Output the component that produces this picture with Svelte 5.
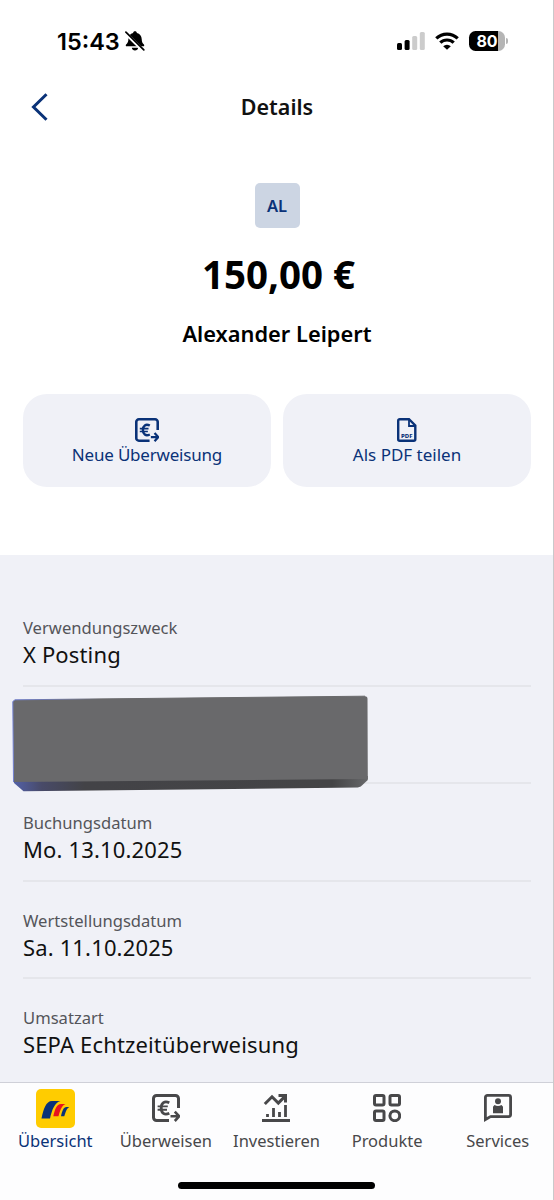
<script>
  const details = [
    { label: 'Verwendungszweck', value: 'X Posting' },
    { label: '', value: '' },
    { label: 'Buchungsdatum', value: 'Mo. 13.10.2025' },
    { label: 'Wertstellungsdatum', value: 'Sa. 11.10.2025' },
    { label: 'Umsatzart', value: 'SEPA Echtzeitüberweisung' },
  ];

  const tabs = [
    { id: 'overview', label: 'Übersicht' },
    { id: 'transfer', label: 'Überweisen' },
    { id: 'invest', label: 'Investieren' },
    { id: 'products', label: 'Produkte' },
    { id: 'services', label: 'Services' },
  ];

  let active = $state('overview');
</script>

{#snippet transferIcon(size)}
  <svg width={size} height={size} viewBox="0 0 28 28" fill="none" stroke="currentColor" stroke-width="3">
    <path d="M17 26.5H4.5a3 3 0 0 1-3-3v-19a3 3 0 0 1 3-3h19a3 3 0 0 1 3 3V14" />
    <path d="M17.300 8.800C12.500 6.400 9.200 9 9.200 14s3.300 7.600 8.100 5.200" stroke-width="2.800" />
    <path d="M5.600 12.400h10.200M5.600 15.800h9.400" stroke-width="1.900" />
    <path d="M18.500 22.300h8M22.800 17.600l4.300 4.700-4.300 4.700" stroke-width="2.600" />
  </svg>
{/snippet}

<div class="screen">
  <div class="status">
    <div class="clock">
      <span>15:43</span>
      <svg width="20" height="20" viewBox="0 0 20 20">
        <path d="M10 .3c1.100 0 1.800.7 1.900 1.600 3 .8 4.700 3.100 4.800 6.100.1 3 .8 4.300 2.200 5.400.6.600.4 1.900-.6 1.900H1.700c-1 0-1.200-1.300-.6-1.900 1.500-1.200 2.200-2.400 2.300-5.400.1-3 1.700-5.300 4.700-6.100C8.200 1 8.900.3 10 .3zM6.800 16.800h6.400c-.3 1.700-1.500 2.600-3.200 2.600s-2.900-.9-3.200-2.600z" />
        <path d="M.4 2 18 19.500" stroke="#fff" stroke-width="3.300" />
        <path d="M.9 1.200 18.800 18.900" stroke="#000" stroke-width="1.700" stroke-linecap="round" />
      </svg>
    </div>
    <div class="signals">
      <svg width="28" height="18" viewBox="0 0 28 18">
        <rect x="0" y="11" width="5" height="7" rx="1.500" />
        <rect x="7.600" y="8" width="5" height="10" rx="1.500" />
        <rect x="15.200" y="4" width="5" height="14" rx="1.500" fill="#ccc" />
        <rect x="22.800" y="0" width="5" height="18" rx="1.500" fill="#ccc" />
      </svg>
      <svg class="wifi" width="24" height="18" viewBox="0 0 24 18" fill="none" stroke="#000" stroke-width="3.200">
        <path d="M1.300 6.400a15.300 15.300 0 0 1 21.400 0" />
        <path d="M5.300 10.700a9.600 9.600 0 0 1 13.400 0" />
        <path d="M12 17.800 8.200 14.200a5.400 5.400 0 0 1 7.600 0z" fill="#000" stroke="none" />
      </svg>
      <div class="battery"><span>80</span></div>
      <i class="cap"></i>
    </div>
  </div>

  <header>
    <button class="back" aria-label="Zurück">
      <svg width="17" height="28" viewBox="0 0 17 28" fill="none" stroke="#0a3278" stroke-width="3">
        <path d="M15.500 1.300 2.500 14l13 12.700" />
      </svg>
    </button>
    <h1>Details</h1>
  </header>

  <section class="summary">
    <div class="avatar">AL</div>
    <div class="amount">150,00 €</div>
    <div class="name">Alexander Leipert</div>
  </section>

  <div class="actions">
    <button>
      {@render transferIcon(24)}
      <span class="new">Neue Überweisung</span>
    </button>
    <button>
      <svg width="20" height="24" viewBox="0 0 20 24" fill="none" stroke="currentColor" stroke-width="2.400">
        <path d="M2.700 1.200H12L18.300 7.500V21.300a1.500 1.500 0 0 1-1.500 1.500H2.700a1.500 1.500 0 0 1-1.500-1.500V2.700a1.500 1.500 0 0 1 1.500-1.500z" />
        <path d="M12 1.200V8h6.300" stroke-width="1.800" />
        <text x="9.800" y="19.500" text-anchor="middle">PDF</text>
      </svg>
      <span>Als PDF teilen</span>
    </button>
  </div>

  <section class="details">
    {#each details as row}
      <div class="row">
        <div class="label">{row.label}</div>
        <div class="value">{row.value}</div>
      </div>
    {/each}
    <svg class="cover" width="358" height="98" viewBox="0 0 358 98">
      <defs>
        <linearGradient id="edge">
          <stop offset="0" stop-color="#5361a8" />
          <stop offset=".08" stop-color="#484a68" />
          <stop offset=".2" stop-color="#434347" />
          <stop offset=".9" stop-color="#444446" />
          <stop offset="1" stop-color="#67686a" />
        </linearGradient>
        <linearGradient id="outline">
          <stop offset="0" stop-color="#7180d2" />
          <stop offset=".25" stop-color="#69696b" />
        </linearGradient>
      </defs>
      <path d="M1.500 86 355.800 82v4l-7 6.500-3 1L11.500 97.200 2 89z" fill="url(#edge)" />
      <path d="M.8 7.500 3 5.800 353 2.200a2.500 2.500 0 0 1 2.500 2.500l.3 80.300L1.500 88z" fill="#69696b" />
      <path d="M1.500 88 .8 7.500 3 5.800 353 2.200" fill="none" stroke="url(#outline)" />
    </svg>
  </section>

  <nav>
    {#each tabs as tab}
      <button class="tab" class:active={active === tab.id} onclick={() => (active = tab.id)}>
        <span class="icon">
          {#if tab.id === 'overview'}
            <svg width="39" height="39" viewBox="0 0 39 39">
              <rect width="39" height="39" rx="5" fill="#fc0" />
              <path d="M5.500 29.500C7.500 20 10 12 16 12h8.500c-6 1.500-8.500 9-10.500 17.500z" fill="#0a3278" />
              <path d="M17.300 27.300c1.500-7 3.500-12.300 7.700-12.300h4.500c-4 1.500-5.500 7-7 12.300z" fill="#e8141e" />
              <path d="M25 27.300c1-5 2.500-9.300 5.500-9.300h2.800c-2.800 1.500-3.800 5.500-5 9.300z" fill="#0a3278" />
            </svg>
          {:else if tab.id === 'transfer'}
            {@render transferIcon(28)}
          {:else if tab.id === 'invest'}
            <svg width="28" height="28" viewBox="0 0 28 28" fill="none" stroke="currentColor" stroke-width="3">
              <path d="M2.800 10 10 2.800l6.300 6.300L23 2.400M16.500 1.500h7V8.500" />
              <path d="M0 26.500h28" />
              <path d="M5.500 20v3M11.500 14v9M17.500 18v5M23.500 11v12" stroke-width="2.800" />
            </svg>
          {:else if tab.id === 'products'}
            <svg width="28" height="28" viewBox="0 0 28 28" fill="none" stroke="currentColor" stroke-width="3">
              <rect x="1.500" y="1.500" width="9.500" height="9.500" rx="1.500" />
              <rect x="17" y="1.500" width="9.500" height="9.500" rx="1.500" />
              <rect x="1.500" y="17" width="9.500" height="9.500" rx="1.500" />
              <circle cx="21.800" cy="21.800" r="4.900" />
            </svg>
          {:else}
            <svg width="28" height="28" viewBox="0 0 28 28" fill="none" stroke="currentColor" stroke-width="2.800">
              <path d="M1.400 25.500V3.400a2 2 0 0 1 2-2h21.200a2 2 0 0 1 2 2v17.200a2 2 0 0 1-2 2H6.500z" />
              <circle cx="14" cy="7.200" r="3" fill="currentColor" stroke="none" />
              <path d="M9 19.200v-6.500l1.500-1.700q3.500 1.800 7 0l1.500 1.700v6.500z" fill="currentColor" stroke="none" />
            </svg>
          {/if}
        </span>
        <span>{tab.label}</span>
      </button>
    {/each}
    <div class="home"></div>
  </nav>
</div>

<style>
  :global(body) {
    margin: 0;
    background: #fff;
  }

  .screen {
    box-sizing: border-box;
    width: 554px;
    height: 1200px;
    display: flex;
    flex-direction: column;
    overflow: hidden;
    position: relative;
    background: #fff;
    color: #111;
    font-family: 'Noto Sans', sans-serif;
  }

  /* thin line along the right side of the screen */
  .screen::after {
    content: '';
    position: absolute;
    inset: 0 0 0 auto;
    width: 1px;
    background: #c9c9cb;
  }

  button {
    border: 0;
    padding: 0;
    margin: 0;
    background: none;
    color: inherit;
    font: inherit;
  }

  svg {
    display: block;
    flex: none;
  }

  .status {
    height: 82px;
    flex: none;
    display: flex;
    align-items: center;
    justify-content: space-between;
    padding: 0 46px 0 57px;
    box-sizing: border-box;
    font-family: Inter, sans-serif;
    color: #000;
  }

  .clock,
  .signals {
    display: flex;
    align-items: center;
  }

  .clock {
    gap: 5px;
    font-size: 23.500px;
    font-weight: 600;
  }

  .wifi {
    margin: 0 10px;
  }

  .battery {
    width: 36px;
    height: 20px;
    border-radius: 6.500px;
    background: linear-gradient(90deg, #000 29px, #b5b5b5 29px);
    color: #fff;
    font-size: 16px;
    font-weight: 700;
    line-height: 20px;
    text-align: center;
  }

  .cap {
    width: 2px;
    height: 6px;
    margin-left: 1px;
    border-radius: 0 2px 2px 0;
    background: #b5b5b5;
  }

  header {
    height: 49px;
    flex: none;
    display: grid;
    grid-template-columns: 60px 1fr 60px;
    align-items: center;
  }

  .back {
    justify-self: start;
    margin-left: 31px;
  }

  h1 {
    margin: 0;
    font-size: 21.500px;
    font-weight: 600;
    line-height: 30px;
    text-align: center;
  }

  .summary {
    height: 263px;
    flex: none;
    display: flex;
    flex-direction: column;
    align-items: center;
    padding-top: 52px;
    box-sizing: border-box;
  }

  .avatar {
    width: 45px;
    height: 45px;
    border-radius: 5px;
    background: #ccd5e3;
    color: #0a3278;
    font-size: 16.500px;
    font-weight: 600;
    line-height: 46px;
    text-align: center;
  }

  .amount {
    margin-top: 21px;
    padding-left: 3px;
    font-size: 38.500px;
    font-weight: 700;
    line-height: 50px;
    color: #000;
  }

  .name {
    margin-top: 20px;
    font-size: 21.800px;
    font-weight: 600;
    line-height: 30px;
    color: #000;
  }

  .actions {
    height: 161px;
    flex: none;
    display: grid;
    grid-template-columns: 1fr 1fr;
    grid-template-rows: 93px;
    gap: 12px;
    padding: 0 23px;
    box-sizing: border-box;
  }

  .actions button {
    display: flex;
    flex-direction: column;
    align-items: center;
    padding-top: 24px;
    border-radius: 24px;
    background: #f0f1f7;
    color: #0a3278;
    font-size: 17px;
    line-height: 25px;
  }

  .new {
    letter-spacing: -0.2px;
  }

  .actions text {
    font-size: 6px;
    font-weight: 800;
    fill: currentColor;
    stroke: none;
  }

  .details {
    position: relative;
    flex: 1;
    overflow: hidden;
    padding: 34px 23px 0;
    background: #f0f1f7;
  }

  .row {
    height: 97.600px;
    box-sizing: border-box;
    padding-top: 27px;
    border-bottom: 2px solid #e5e6eb;
  }

  .row:nth-child(5) {
    border-bottom: 0;
  }

  .label {
    height: 24px;
    font-size: 16.600px;
    line-height: 24px;
    color: #54555a;
  }

  .value {
    margin-top: -1px;
    font-size: 22px;
    line-height: 30px;
    letter-spacing: 0.150px;
  }

  .cover {
    position: absolute;
    left: 12px;
    top: 139px;
  }

  nav {
    height: 118px;
    flex: none;
    box-sizing: border-box;
    display: grid;
    grid-template-columns: repeat(5, 1fr);
    grid-template-rows: 99px 7px;
    padding-right: 1px;
    border-top: 1px solid #cfd0d8;
    background: #fdfdfe;
  }

  .tab {
    display: flex;
    flex-direction: column;
    align-items: center;
    padding-top: 5px;
    color: #48484a;
    font-size: 16.500px;
    line-height: 25px;
  }

  .tab.active {
    color: #0a3278;
  }

  .icon {
    height: 40px;
    display: flex;
    align-items: center;
  }

  .home {
    grid-column: 1 / -1;
    justify-self: center;
    width: 197px;
    height: 7px;
    border-radius: 4px;
    background: #000;
  }
</style>
